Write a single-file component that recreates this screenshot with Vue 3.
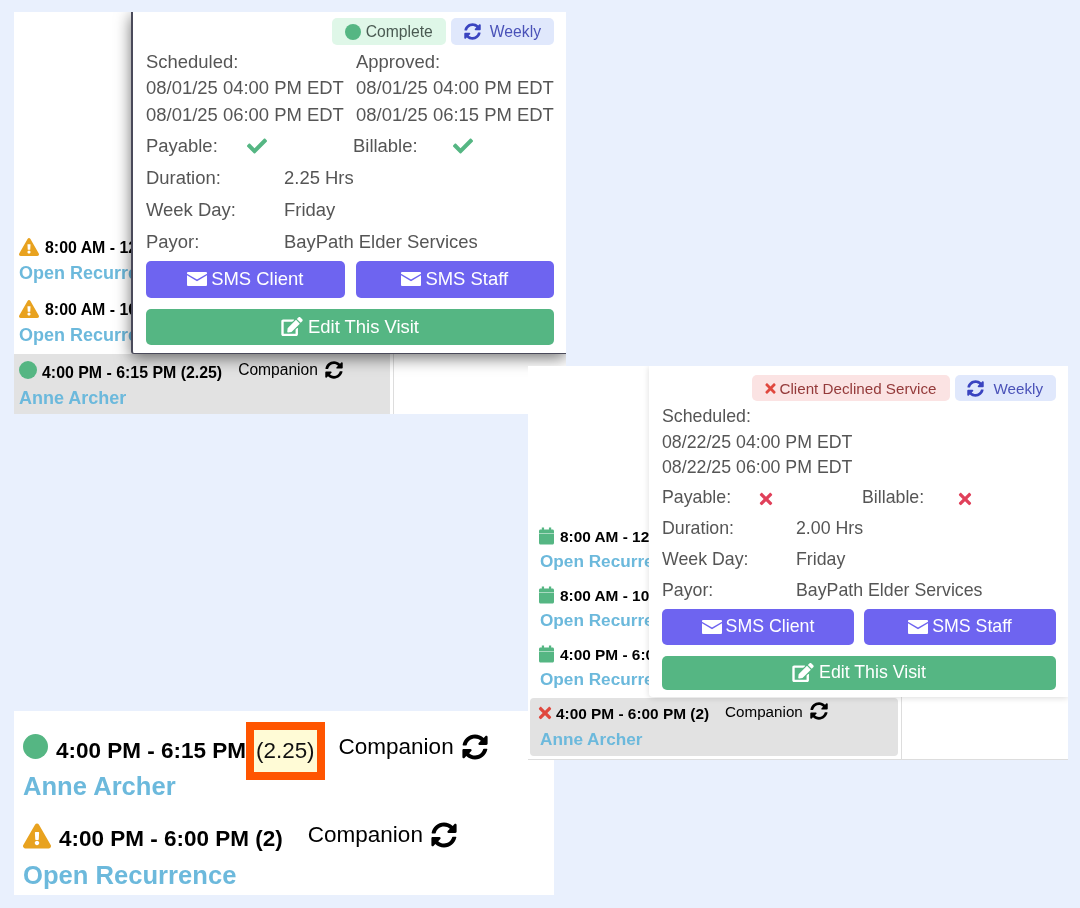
<script setup>
const visits = [
  {
    key: 'shot-a',
    status: 'Complete',
    statusClass: 'tag-ok',
    statusIcon: 'dot',
    rowIcon: 'warn',
    rows: ['8:00 AM - 12', '8:00 AM - 10'],
    current: '4:00 PM - 6:15 PM (2.25)',
    currentIcon: 'dot',
    scheduled: ['08/01/25 04:00 PM EDT', '08/01/25 06:00 PM EDT'],
    approved: ['08/01/25 04:00 PM EDT', '08/01/25 06:15 PM EDT'],
    flag: 'check',
    duration: '2.25 Hrs',
  },
  {
    key: 'shot-b',
    status: 'Client Declined Service',
    statusClass: 'tag-no',
    statusIcon: 'times',
    rowIcon: 'calendar',
    rows: ['8:00 AM - 12', '8:00 AM - 10', '4:00 PM - 6:0'],
    current: '4:00 PM - 6:00 PM (2)',
    currentIcon: 'times',
    scheduled: ['08/22/25 04:00 PM EDT', '08/22/25 06:00 PM EDT'],
    approved: null,
    flag: 'times',
    duration: '2.00 Hrs',
  },
]
</script>

<template>
  <div class="canvas">
    <svg class="sprite" aria-hidden="true">
      <symbol id="sync" viewBox="0 0 512 512"><path fill="currentColor" d="M370.72 133.28C339.458 104.008 298.888 87.962 255.848 88c-77.458.068-144.328 53.178-162.791 126.85-1.344 5.363-6.122 9.15-11.651 9.15H24.103c-7.498 0-13.194-6.807-11.807-14.176C33.933 94.924 134.813 8 256 8c66.448 0 126.791 26.136 171.315 68.685L463.03 40.97C478.149 25.851 504 36.559 504 57.941V192c0 13.255-10.745 24-24 24H345.941c-21.382 0-32.09-25.851-16.971-40.971l41.75-41.749zM32 296h134.059c21.382 0 32.09 25.851 16.971 40.971l-41.75 41.75c31.262 29.273 71.835 45.319 114.876 45.28 77.418-.07 144.315-53.144 162.787-126.849 1.344-5.363 6.122-9.15 11.651-9.15h57.304c7.498 0 13.194 6.807 11.807 14.176C478.067 417.076 377.187 504 256 504c-66.448 0-126.791-26.136-171.315-68.685L48.97 471.03C33.851 486.149 8 475.441 8 454.059V320c0-13.255 10.745-24 24-24z"/></symbol>
      <symbol id="envelope" viewBox="0 0 20 14"><path fill="currentColor" d="M1 0h18a1 1 0 0 1 1 1v.7L10 7.6 0 1.700V1a1 1 0 0 1 1-1zM0 3.300 10 9.200 20 3.300V13a1 1 0 0 1-1 1H1a1 1 0 0 1-1-1z"/></symbol>
      <symbol id="edit" viewBox="0 0 576 512"><path fill="currentColor" d="M402.6 83.2l90.2 90.2c3.8 3.8 3.8 10 0 13.8L274.4 405.6l-92.8 10.3c-12.4 1.4-22.9-9.1-21.5-21.5l10.3-92.8L388.8 83.2c3.8-3.8 10-3.8 13.8 0zm162-22.9l-48.8-48.8c-15.2-15.2-39.9-15.2-55.2 0l-35.4 35.4c-3.8 3.8-3.8 10 0 13.8l90.2 90.2c3.8 3.8 10 3.8 13.8 0l35.4-35.4c15.2-15.3 15.2-40 0-55.2zM384 346.2V448H64V128h229.8c3.2 0 6.2-1.3 8.5-3.5l40-40c7.6-7.6 2.2-20.5-8.5-20.5H48C21.5 64 0 85.5 0 112v352c0 26.5 21.5 48 48 48h352c26.5 0 48-21.5 48-48V306.2c0-10.7-12.9-16-20.5-8.5l-40 40c-2.2 2.3-3.5 5.3-3.5 8.5z"/></symbol>
      <symbol id="warn" viewBox="0 0 576 512"><path fill="currentColor" d="M569.517 440.013C587.975 472.007 564.806 512 527.94 512H48.054c-36.937 0-59.999-40.055-41.577-71.987L246.423 24.035c18.467-32.009 64.72-31.951 83.154 0l239.94 416.978zM288 354c-25.405 0-46 20.595-46 46s20.595 46 46 46 46-20.595 46-46-20.595-46-46-46zm-43.673-165.346l7.418 136c.347 6.364 5.609 11.346 11.982 11.346h48.546c6.373 0 11.635-4.982 11.982-11.346l7.418-136c.375-6.874-5.098-12.654-11.982-12.654h-63.383c-6.884 0-12.356 5.78-11.981 12.654z"/></symbol>
      <symbol id="times" viewBox="0 0 352 512"><path fill="currentColor" d="M242.72 256l100.07-100.07c12.28-12.28 12.28-32.19 0-44.48l-22.24-22.24c-12.28-12.28-32.19-12.28-44.48 0L176 189.28 75.93 89.21c-12.28-12.28-32.19-12.28-44.48 0L9.21 111.45c-12.28 12.28-12.28 32.19 0 44.48L109.28 256 9.21 356.07c-12.28 12.28-12.28 32.19 0 44.48l22.24 22.24c12.28 12.28 32.2 12.28 44.48 0L176 322.72l100.07 100.07c12.28 12.28 32.2 12.28 44.48 0l22.24-22.24c12.28-12.28 12.28-32.19 0-44.48L242.72 256z"/></symbol>
      <symbol id="check" viewBox="0 0 512 512"><path fill="currentColor" d="M173.898 439.404l-166.4-166.4c-9.997-9.997-9.997-26.206 0-36.204l36.203-36.204c9.997-9.998 26.207-9.998 36.204 0L192 312.69 432.095 72.596c9.997-9.997 26.207-9.997 36.204 0l36.203 36.204c9.997 9.997 9.997 26.206 0 36.204l-294.4 294.401c-9.998 9.997-26.207 9.997-36.204-.001z"/></symbol>
      <symbol id="calendar" viewBox="0 0 16 18"><path fill="currentColor" d="M3 0h2.4v2h5.200V0H13v2h1.400c.9 0 1.600.7 1.600 1.600v2.200H0V3.600C0 2.700.7 2 1.600 2H3zM0 6.200h16v10.200c0 .9-.7 1.600-1.600 1.600H1.600C.7 18 0 17.300 0 16.400z"/></symbol>
    </svg>

    <section class="shot closeup">
      <div class="big-row">
        <span class="dot big-dot"></span>
        <b class="big-time">4:00 PM - 6:15 PM</b>
        <span class="hours">(2.25)</span>
        <span class="big-service first">Companion</span>
        <svg class="big-sync"><use href="#sync" /></svg>
      </div>
      <a class="big-link one">Anne Archer</a>
      <div class="big-row second">
        <svg class="big-warn"><use href="#warn" /></svg>
        <b class="big-time">4:00 PM - 6:00 PM (2)</b>
        <span class="big-service">Companion</span>
        <svg class="big-sync"><use href="#sync" /></svg>
      </div>
      <a class="big-link two">Open Recurrence</a>
    </section>

    <section v-for="v in visits" :key="v.key" class="shot" :class="v.key">
      <div class="day">
        <div v-for="(r, i) in v.rows" :key="i" class="entry covered">
          <div class="entry-line">
            <svg class="row-icon"><use :href="'#' + v.rowIcon" /></svg>
            <b class="time">{{ r }}</b>
          </div>
          <a class="link">Open Recurre</a>
        </div>
        <div class="entry current">
          <div class="entry-line">
            <span v-if="v.currentIcon === 'dot'" class="dot cur-dot"></span>
            <svg v-else class="cur-x"><use href="#times" /></svg>
            <b class="time">{{ v.current }}</b>
            <span class="service">Companion</span>
            <svg class="sync"><use href="#sync" /></svg>
          </div>
          <a class="link">Anne Archer</a>
        </div>
      </div>

      <div class="popover">
        <div class="tags">
          <span class="tag" :class="v.statusClass">
            <span v-if="v.statusIcon === 'dot'" class="dot tag-dot"></span>
            <svg v-else class="tag-x"><use href="#times" /></svg>
            {{ v.status }}
          </span>
          <span class="tag tag-week">
            <svg class="tag-sync"><use href="#sync" /></svg>
            Weekly
          </span>
        </div>

        <div class="times">
          <div class="times-col">
            <div>Scheduled:</div>
            <div v-for="s in v.scheduled" :key="s">{{ s }}</div>
          </div>
          <div v-if="v.approved" class="times-col">
            <div>Approved:</div>
            <div v-for="s in v.approved" :key="s">{{ s }}</div>
          </div>
        </div>

        <div class="flags">
          <span>Payable:</span>
          <svg class="flag" :class="v.flag"><use :href="'#' + v.flag" /></svg>
          <span>Billable:</span>
          <svg class="flag" :class="v.flag"><use :href="'#' + v.flag" /></svg>
        </div>
        <div class="fact"><span class="fact-label">Duration:</span><span>{{ v.duration }}</span></div>
        <div class="fact"><span class="fact-label">Week Day:</span><span>Friday</span></div>
        <div class="fact"><span class="fact-label">Payor:</span><span>BayPath Elder Services</span></div>

        <div class="sms">
          <button class="btn btn-sms"><svg class="btn-icon"><use href="#envelope" /></svg>SMS Client</button>
          <button class="btn btn-sms"><svg class="btn-icon"><use href="#envelope" /></svg>SMS Staff</button>
        </div>
        <button class="btn btn-edit"><svg class="edit-icon"><use href="#edit" /></svg>Edit This Visit</button>
      </div>
    </section>
  </div>
</template>

<style>
html, body { margin: 0; background: #e9f0fd; }
</style>

<style scoped>
.canvas {
  position: relative;
  width: 1080px;
  height: 908px;
  overflow: hidden;
  background: #e9f0fd;
  font-family: "Liberation Sans", Arial, sans-serif;
  filter: blur(0.35px);
}
.sprite { position: absolute; width: 0; height: 0; }

.shot {
  position: absolute;
  background: #fff;
  overflow: hidden;
  color: #000;
}
.shot-a { left: 14px; top: 12px; width: 552px; height: 402px; }
.shot-b { left: 528px; top: 366px; width: 540px; height: 394px; border-bottom: 1px solid #ddd; box-sizing: border-box; }
.closeup { left: 14px; top: 711px; width: 540px; height: 184px; padding: 22px 0 0 9px; box-sizing: border-box; }

/* calendar column */
.day {
  box-sizing: border-box;
  height: 100%;
  display: flex;
  flex-direction: column;
  justify-content: flex-end;
  border-right: 1px solid #ddd;
}
.shot-a .day { width: 380px; padding-right: 3px; }
.shot-b .day { width: 372px; margin-left: 2px; padding-right: 3px; padding-bottom: 3px; }

.entry { box-sizing: border-box; }
.shot-a .entry { height: 62px; padding: 5px 0 0 5px; }
.shot-b .entry { height: 59px; padding: 4px 0 0 10px; }
.shot-a .covered .link { margin-top: -1px; }
.shot-b .covered .row-icon { margin-left: -1px; }
.shot-a .entry.current { height: 60px; padding-top: 6px; }
.shot-a .current .link { margin-top: -1px; }
.shot-b .entry.current { height: 58px; padding: 4px 0 0 8px; }
.current { background: #e2e2e2; }
.shot-b .current { border-radius: 4px; }

.entry-line { display: flex; align-items: center; white-space: nowrap; }
.shot-a .entry-line { height: 26px; }
.shot-b .entry-line { height: 24px; }
.time { font-size: 15.9px; }
.shot-b .time { font-size: 15.4px; }
.link { display: block; color: #6cb9dc; font-weight: 700; white-space: nowrap; }
.shot-a .link { font-size: 18px; line-height: 26px; }
.shot-b .link { font-size: 17.2px; line-height: 25px; }
.shot-b .current .link { margin: 1px 0 0 2px; }

.row-icon { flex: none; margin-right: 6px; }
.shot-a .row-icon { width: 20px; height: 18px; margin-top: -2px; color: #e8a21f; }
.shot-b .row-icon { width: 15px; height: 18px; margin-top: -3px; color: #55b683; }

.dot { display: block; flex: none; border-radius: 50%; background: #55b683; }
.cur-dot { width: 18px; height: 18px; margin: -7px 5px 0 0; }
.cur-x { flex: none; width: 14px; height: 18px; margin: -3px 4px 0 0; color: #e0483e; }
.service { margin-left: 16px; position: relative; top: -3px; }
.shot-a .service { font-size: 15.6px; }
.shot-b .service { font-size: 15.2px; }
.sync { flex: none; width: 18px; height: 18px; margin-left: 7px; position: relative; top: -3px; }

/* popover */
.popover {
  position: absolute;
  top: 0;
  right: 0;
  box-sizing: border-box;
  background: #fff;
  color: #555;
}
.shot-a .popover {
  left: 117px;
  bottom: 60px;
  padding: 6px 12px 0 13px;
  font-size: 18.45px;
  border-left: 2px solid #4a4a5a;
  border-bottom: 1px solid #4a4a5a;
  border-bottom-left-radius: 3px;
  box-shadow: 0 4px 16px rgba(0, 0, 0, 0.55);
}
.shot-b .popover {
  left: 121px;
  bottom: 62px;
  padding: 9px 12px 0 13px;
  font-size: 17.75px;
  border-bottom-left-radius: 4px;
  box-shadow: 0 1px 6px rgba(0, 0, 0, 0.14);
}

.tags { display: flex; justify-content: flex-end; gap: 5px; }
.tag {
  display: flex;
  align-items: center;
  box-sizing: border-box;
  border-radius: 5px;
  white-space: nowrap;
}
.shot-a .tag { height: 27px; font-size: 15.7px; }
.shot-b .tag { height: 26px; font-size: 15.2px; }
.tag-ok { background: #dff7e8; color: #4a5a52; padding: 0 13px; gap: 5px; }
.tag-no { background: #fbe3e3; color: #943a3a; padding: 0 14px 0 13px; gap: 3px; }
.tag-week { background: #e0e8fc; color: #4a52b8; padding: 0 13px; gap: 9px; }
.shot-b .tag-week { padding: 0 13px 0 12px; }
.tag-dot { width: 16px; height: 16px; }
.tag-x { width: 11px; height: 15px; color: #e0483e; }
.tag-sync { width: 17px; height: 17px; color: #3a44c0; }

.times { display: flex; }
.shot-a .times { margin-top: 3.5px; line-height: 26.5px; }
.shot-b .times { margin-top: 3px; line-height: 25.5px; }
.times-col { white-space: nowrap; flex: none; }
.shot-a .times-col { width: 210px; }

.flags { display: grid; align-items: center; }
.shot-a .flags { height: 32px; margin-top: 2px; grid-template-columns: 101px 106px 100px 1fr; }
.shot-b .flags { height: 31px; margin-top: 1px; grid-template-columns: 97px 103px 96px 1fr; }
.flag { display: block; }
.flag.check { width: 20px; height: 20px; color: #55b683; }
.flag.times { width: 14px; height: 18px; color: #e0405a; }

.fact { display: flex; white-space: nowrap; align-items: center; }
.shot-a .fact { height: 32px; }
.shot-b .fact { height: 31px; }
.shot-a .fact-label { width: 138px; }
.shot-b .fact-label { width: 134px; }

.sms { display: flex; }
.shot-a .sms { gap: 11px; margin: 2.5px 0 11px; }
.shot-b .sms { gap: 10px; margin: 3px 0 11px; }
.btn {
  display: flex;
  align-items: center;
  justify-content: center;
  gap: 4px;
  width: 100%;
  padding: 0;
  border: 0;
  border-radius: 5px;
  color: #fff;
  font: inherit;
}
.btn-sms { flex: 1; background: #6e64f0; }
.btn-edit { background: #55b683; }
.shot-a .btn-sms { height: 37px; }
.shot-a .btn-edit { height: 36px; }
.shot-b .btn-sms { height: 36px; }
.shot-b .btn-edit { height: 34px; }
.btn-icon { width: 20px; height: 14px; flex: none; }
.edit-icon { width: 22px; height: 19px; flex: none; margin-right: 1px; }

/* close-up */
.big-row { display: flex; align-items: center; height: 36px; white-space: nowrap; }
.big-row.second { margin-top: 16px; }
.big-time { font-size: 22.5px; }
.big-dot { width: 25px; height: 25px; margin: -10px 8px 0 0; }
.big-warn { flex: none; width: 28px; height: 26px; margin: -6px 8px 0 0; color: #e8a21f; }
.hours {
  flex: none;
  position: relative;
  margin: -11px 14px -11px 0;
  padding: 0 2px;
  border: 8px solid #ff5500;
  background: #fffbd6;
  font-size: 22.4px;
  line-height: 42px;
  color: #111;
}
.big-service { font-size: 22.5px; position: relative; top: -4px; margin-left: 25px; }
.big-service.first { margin-left: 0; }
.big-sync { flex: none; width: 26px; height: 26px; margin-left: 8px; position: relative; top: -4px; }
.big-link { display: block; color: #6cb9dc; font-weight: 700; font-size: 25.6px; line-height: 38px; }
.big-link.one { margin-top: -2px; }
.big-link.two { margin-top: -1px; }
</style>
